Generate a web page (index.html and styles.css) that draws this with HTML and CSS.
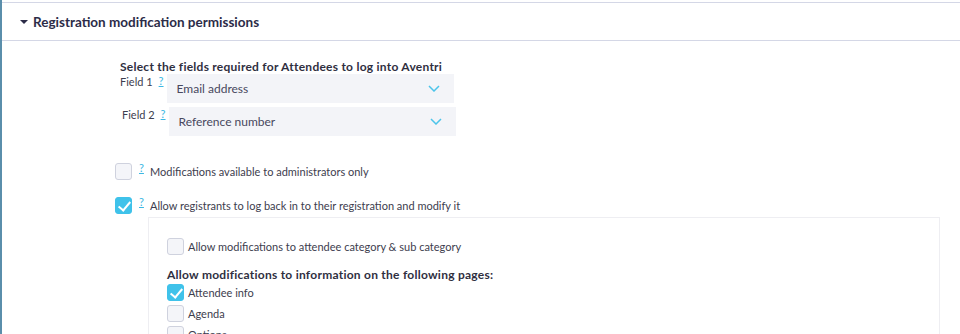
FILE: index.html
```html
<!DOCTYPE html>
<html lang="en">
<head>
    <meta charset="UTF-8">
    <title>Registration modification permissions</title>
    <link rel="stylesheet" href="styles.css">
</head>
<body>
    <div class="panel">
        <div class="panel-head">
            <span class="caret"></span>
            <h2>Registration modification permissions</h2>
        </div>
        <div class="panel-body">
            <div class="login-fields">
                <div class="fields-title">Select the fields required for Attendees to log into Aventri</div>
                <div class="field-row">
                    <span class="field-label">Field 1</span>
                    <a class="help">?</a>
                    <div class="select">
                        <span>Email address</span>
                        <svg class="chev" width="12" height="7" viewBox="0 0 12 7"><path d="M1 1l5 5 5-5" fill="none" stroke="#4cc4ea" stroke-width="1.5"/></svg>
                    </div>
                </div>
                <div class="field-row second">
                    <span class="field-label">Field 2</span>
                    <a class="help">?</a>
                    <div class="select">
                        <span>Reference number</span>
                        <svg class="chev" width="12" height="7" viewBox="0 0 12 7"><path d="M1 1l5 5 5-5" fill="none" stroke="#4cc4ea" stroke-width="1.5"/></svg>
                    </div>
                </div>
            </div>

            <div class="option first">
                <span class="check"></span>
                <a class="help">?</a>
                <span class="option-text">Modifications available to administrators only</span>
            </div>
            <div class="option">
                <span class="check on"></span>
                <a class="help">?</a>
                <span class="option-text">Allow registrants to log back in to their registration and modify it</span>
            </div>

            <div class="sub-box">
                <div class="option sub">
                    <span class="check"></span>
                    <span class="option-text">Allow modifications to attendee category &amp; sub category</span>
                </div>
                <div class="pages-title">Allow modifications to information on the following pages:</div>
                <div class="page-row">
                    <span class="check on"></span>
                    <span class="option-text">Attendee info</span>
                </div>
                <div class="page-row">
                    <span class="check"></span>
                    <span class="option-text">Agenda</span>
                </div>
                <div class="page-row">
                    <span class="check"></span>
                    <span class="option-text">Options</span>
                </div>
            </div>
        </div>
    </div>
</body>
</html>
```

FILE: styles.css
```css
* {
    margin: 0;
    padding: 0;
    box-sizing: border-box;
    font-family: 'Lato', sans-serif;
}

body {
    background: #fff;
    border-left: 2px solid #5a8eab;
    height: 334px;
    overflow: hidden;
    color: #3d3d52;
}

.panel {
    margin-top: 2px;
    border-top: 1px solid #d4d7e6;
}

.panel-head {
    display: flex;
    align-items: center;
    height: 38px;
    padding-left: 18px;
    border-bottom: 1px solid #d4d7e6;
}

.caret {
    width: 0;
    height: 0;
    border-left: 4px solid transparent;
    border-right: 4px solid transparent;
    border-top: 4px solid #2c2c48;
    margin-right: 5px;
    margin-top: 1px;
}

.panel-head h2 {
    font-size: 13.5px;
    font-weight: 700;
    color: #2c2c48;
}

.panel-body {
    padding: 18px 0 0 113px;
}

.login-fields {
    padding-left: 5px;
}

.fields-title {
    font-size: 12px;
    font-weight: 700;
    color: #2f2f3f;
    letter-spacing: 0.25px;
    line-height: 15px;
}

.field-row {
    display: flex;
    align-items: flex-start;
    height: 33px;
}

.field-row.second {
    padding-left: 2px;
}

.field-label {
    font-size: 11px;
    color: #3d3d4e;
    margin-top: 1px;
}

.help {
    font-size: 11px;
    line-height: 11px;
    color: #3cb8e3;
    text-decoration: underline;
    margin-left: 6px;
    margin-top: 1px;
    width: 8px;
}

.select {
    width: 287px;
    height: 29px;
    background: #f3f4f8;
    display: flex;
    align-items: center;
    justify-content: space-between;
    padding: 0 14px 0 10px;
    font-size: 12px;
    color: #48485e;
}

.option {
    display: flex;
    align-items: center;
    font-size: 11px;
    height: 18px;
}

.option.first {
    margin-top: 22px;
}

.option + .option {
    margin-top: 16px;
}

.check {
    width: 17px;
    height: 17px;
    border: 1px solid #cfd2de;
    border-radius: 3px;
    background: #f4f5f9;
    margin-right: 7px;
    flex-shrink: 0;
    position: relative;
}

.check.on {
    background: #3fc2ea;
    border-color: #3fc2ea;
}

.check.on::after {
    content: "";
    position: absolute;
    left: 5px;
    top: 1px;
    width: 5px;
    height: 10px;
    border-right: 2.5px solid #fff;
    border-bottom: 2.5px solid #fff;
    transform: rotate(40deg);
}

.option .help {
    margin-left: 0;
    margin-top: -8px;
    width: 11px;
}

.option-text {
    color: #3d3d4e;
}

.sub-box {
    margin: 3px 0 0 33px;
    width: 792px;
    height: 200px;
    border: 1px solid #eeeef2;
    border-bottom: none;
    padding: 19px 0 0 18px;
}

.option.sub .check {
    margin-right: 4px;
}

.pages-title {
    font-size: 12px;
    font-weight: 700;
    letter-spacing: 0.25px;
    color: #2f2f3f;
    margin-top: 13px;
    line-height: 14px;
}

.page-row {
    display: flex;
    align-items: center;
    font-size: 11px;
    height: 21px;
}

.page-row .check {
    margin-right: 4px;
}
```
